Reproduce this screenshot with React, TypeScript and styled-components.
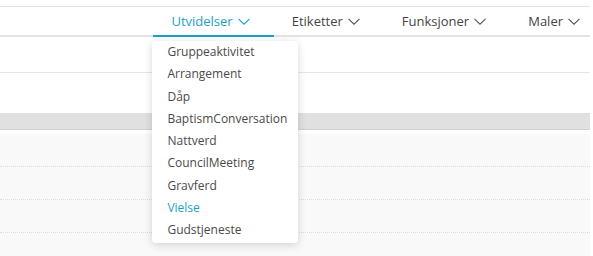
import styled, { createGlobalStyle } from 'styled-components';

const GlobalStyle = createGlobalStyle`
  html, body {
    margin: 0;
    padding: 0;
    background: #fff;
    font-family: "Open Sans", "Noto Sans", sans-serif;
    color: #444;
  }
`;

const Page = styled.div`
  width: 590px;
  padding-top: 6px;
`;

const NavBar = styled.div`
  position: relative;
  display: flex;
  justify-content: flex-end;
  height: 28px;
  border-top: 1px solid #e3e3e3;
  border-bottom: 2px solid #e3e3e3;
`;

const Tab = styled.div<{ $active?: boolean; $last?: boolean }>`
  position: relative;
  display: flex;
  align-items: center;
  gap: 5px;
  padding: 0 ${(p) => (p.$last ? '10px' : '24px')} 0 18px;
  margin-bottom: -2px;
  font-size: 13px;
  color: ${(p) => (p.$active ? '#1ba0c8' : '#444')};
  border-bottom: 2px solid ${(p) => (p.$active ? '#1ba0c8' : 'transparent')};
  white-space: nowrap;
`;

const Chevron = ({ color }: { color: string }) => (
  <svg width="12" height="7" viewBox="0 0 12 7" fill="none">
    <polyline points="0.5,0.8 6,6.2 11.5,0.8" stroke={color} strokeWidth="1.1" />
  </svg>
);

const Menu = styled.div`
  position: absolute;
  top: 34px;
  left: -1px;
  width: 146px;
  padding: 0 0 1px;
  background: #fff;
  border-radius: 4px;
  box-shadow: 0 2px 9px rgba(0, 0, 0, 0.16);
  z-index: 10;
`;

const MenuItem = styled.div<{ $active?: boolean }>`
  height: 22.3px;
  line-height: 22.3px;
  padding-left: 15px;
  font-size: 12px;
  color: ${(p) => (p.$active ? '#1ba0c8' : '#4a4a4a')};
`;

const WhiteRow = styled.div<{ $h: number; $line?: boolean }>`
  height: ${(p) => p.$h}px;
  border-bottom: ${(p) => (p.$line ? '1px solid #e6e6e6' : 'none')};
`;

const GreyBar = styled.div`
  height: 16px;
  background: #dfe0df;
  border-bottom: 1px solid #cfd0cf;
`;

const Body = styled.div`
  margin-top: 4px;
  background: #f9f9f9;
`;

const BodyRow = styled.div`
  height: 32px;
  border-bottom: 1px dotted #dcdcdc;
`;

const tabs = ['Utvidelser', 'Etiketter', 'Funksjoner', 'Maler'];
const items = [
  'Gruppeaktivitet',
  'Arrangement',
  'Dåp',
  'BaptismConversation',
  'Nattverd',
  'CouncilMeeting',
  'Gravferd',
  'Vielse',
  'Gudstjeneste',
];

export default function App() {
  return (
    <>
      <GlobalStyle />
      <Page>
        <NavBar>
          {tabs.map((t, i) => (
            <Tab key={t} $active={i === 0} $last={i === tabs.length - 1}>
              {t}
              <Chevron color={i === 0 ? '#1ba0c8' : '#555'} />
              {i === 0 && (
                <Menu>
                  {items.map((it) => (
                    <MenuItem key={it} $active={it === 'Vielse'}>
                      {it}
                    </MenuItem>
                  ))}
                </Menu>
              )}
            </Tab>
          ))}
        </NavBar>
        <WhiteRow $h={35} $line />
        <WhiteRow $h={40} />
        <GreyBar />
        <Body>
          <BodyRow />
          <BodyRow />
          <BodyRow />
          <BodyRow />
        </Body>
      </Page>
    </>
  );
}
